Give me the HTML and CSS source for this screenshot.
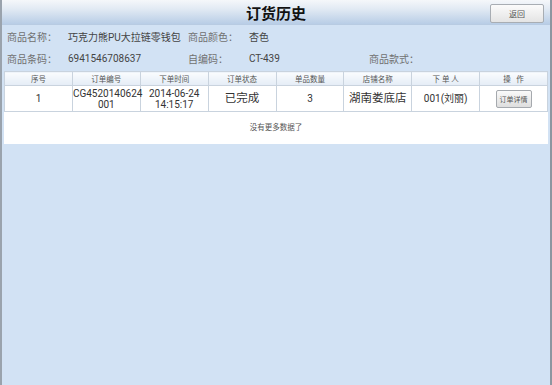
FILE: index.html
```html
<!DOCTYPE html>
<html lang="zh">
<head>
    <meta charset="UTF-8">
    <title>订货历史</title>
    <link rel="stylesheet" href="styles.css">
</head>
<body>
    <div class="screen">
        <div class="titlebar">
            <div class="title">订货历史</div>
            <button class="back">返回</button>
        </div>

        <div class="info">
            <div class="info-row">
                <span class="label">商品名称：</span>
                <span class="value">巧克力熊PU大拉链零钱包</span>
                <span class="label">商品颜色：</span>
                <span class="value">杏色</span>
            </div>
            <div class="info-row">
                <span class="label">商品条码：</span>
                <span class="value">6941546708637</span>
                <span class="label">自编码：</span>
                <span class="value">CT-439</span>
                <span class="label">商品款式：</span>
            </div>
        </div>

        <table class="orders">
            <thead>
                <tr>
                    <th>序号</th>
                    <th>订单编号</th>
                    <th>下单时间</th>
                    <th>订单状态</th>
                    <th>单品数量</th>
                    <th>店铺名称</th>
                    <th>下 单 人</th>
                    <th>操&nbsp;&nbsp;&nbsp;作</th>
                </tr>
            </thead>
            <tbody>
                <tr>
                    <td>1</td>
                    <td>CG4520140624<br>001</td>
                    <td>2014-06-24<br>14:15:17</td>
                    <td class="big">已完成</td>
                    <td>3</td>
                    <td class="big">湖南娄底店</td>
                    <td>001(刘丽)</td>
                    <td><button class="detail">订单详情</button></td>
                </tr>
            </tbody>
        </table>
        <div class="no-more">没有更多数据了</div>
    </div>
</body>
</html>
```

FILE: styles.css
```css
html, body {
    margin: 0;
    padding: 0;
}
body {
    font-family: Roboto, "Noto Sans CJK SC", sans-serif;
    background-color: #d2e2f4;
    color: #333;
}
.screen {
    width: 552px;
    height: 385px;
    box-sizing: border-box;
    border-left: 2px solid #9aa3ad;
    border-right: 2px solid #8d96a0;
    background-color: #d2e2f4;
}
.titlebar {
    height: 24px;
    display: flex;
    align-items: center;
    justify-content: center;
    position: relative;
    background: linear-gradient(#f5f7fa, #e3ebf4 35%, #b8cde6);
    border-bottom: 1px solid #b8cbe2;
}
.title {
    font-size: 15px;
    font-weight: bold;
    color: #111;
}
.back {
    position: absolute;
    right: 6px;
    top: 4px;
    width: 54px;
    height: 19px;
    padding: 0;
    font-family: inherit;
    font-size: 8px;
    color: #555;
    border: 1px solid #a8adb3;
    border-radius: 2px;
    background: linear-gradient(#fbfbfb, #e4e4e4);
}
.info {
    padding: 0 0 2px 5px;
}
.info-row {
    display: grid;
    grid-template-columns: 61px 120px 61px 120px auto;
    height: 22px;
    align-items: center;
    font-size: 10px;
}
.label {
    color: #707070;
}
.value {
    color: #444;
}
.orders {
    width: 544px;
    margin-left: 2px;
    border-collapse: collapse;
    table-layout: fixed;
    background-color: #fff;
}
.orders th, .orders td {
    border: 1px solid #c9d3de;
    text-align: center;
    padding: 0;
}
.orders th {
    height: 13px;
    font-size: 7.5px;
    font-weight: normal;
    color: #555;
    background: linear-gradient(#fafcfe, #e4ecf6);
}
.orders td {
    height: 25px;
    font-size: 10px;
    color: #333;
    line-height: 11px;
}
.orders td.big {
    font-size: 11.5px;
}
.detail {
    width: 36px;
    height: 18px;
    padding: 0;
    font-family: inherit;
    font-size: 7px;
    color: #555;
    border: 1px solid #a5a9ae;
    border-radius: 2px;
    background: linear-gradient(#fafafa, #dedede);
}
.no-more {
    width: 544px;
    margin-left: 2px;
    height: 32px;
    line-height: 32px;
    background-color: #fff;
    text-align: center;
    font-size: 7.5px;
    color: #555;
}
```
